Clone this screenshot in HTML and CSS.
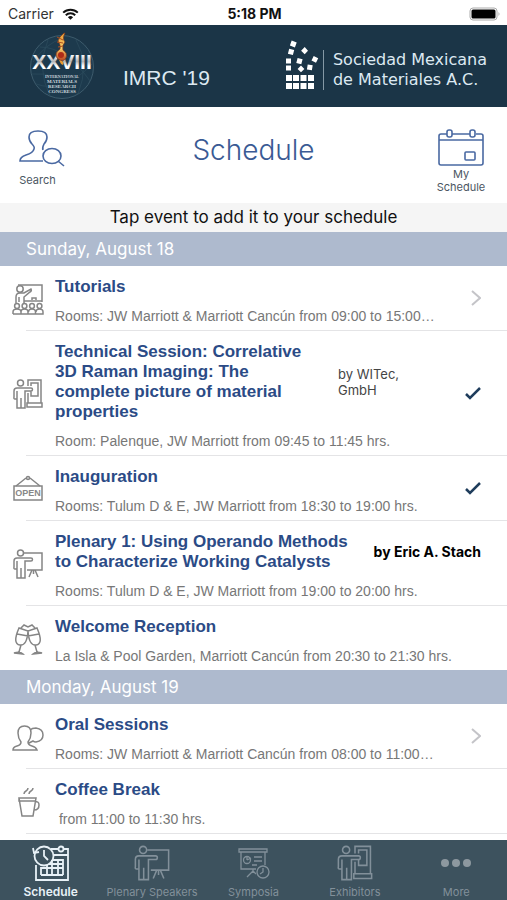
FILE: index.html
```html
<!DOCTYPE html>
<html lang="en">
<head>
<meta charset="utf-8">
<meta name="viewport" content="width=device-width, initial-scale=1">
<title>Schedule</title>
<link rel="stylesheet" href="styles.css">
</head>
<body>
<svg class="defs" aria-hidden="true">
  <symbol id="presenter" viewBox="0 0 32 32">
    <circle cx="8.500" cy="5" r="3"/>
    <path d="M2 13q0-3 3-3h14q1.500 0 1.500 1.500T19 13h-6v17h-4V20M9 30H5V13M5 21H3q-1.500 0-1-2V13M12 5h18v17H15M20 22l-3 7M23 22l3 7M21.500 22v4"/>
  </symbol>
  <symbol id="exhibitor" viewBox="0 0 32 32">
    <circle cx="8.500" cy="5" r="3"/>
    <path d="M2 13q0-3 3-3h14q1.500 0 1.500 1.500T19 13h-6v17h-4V20M9 30H5V13M5 21H3q-1.500 0-1-2V13M16 8V2h13v23M19 8V5h7v13h-7v-5M16 15v10M15 25h15v4H15z"/>
  </symbol>
</svg>
<div class="app">
  <div class="status">
    <div class="carrier"><span>Carrier</span>
      <svg class="wifi" viewBox="0 0 17 12" aria-hidden="true"><path d="M1.200 4.600a10.500 10.500 0 0 1 14.600 0M3.800 7.300a6.700 6.700 0 0 1 9.400 0"/><path class="solid" d="M8.500 11.800 5.900 9.300a3.800 3.800 0 0 1 5.200 0Z"/></svg>
    </div>
    <div class="time">5:18 PM</div>
    <svg class="battery" viewBox="0 0 32 14" aria-hidden="true"><rect class="shell" x="1" y="1" width="27" height="12" rx="3"/><rect x="2.500" y="2.500" width="24" height="9" rx="1.500"/><path class="tip-end" d="M29.500 5q2 2 0 4Z"/></svg>
  </div>

  <header class="brand">
    <svg class="congress" viewBox="0 0 68 72" role="img" aria-label="International Materials Research Congress">
      <defs><linearGradient id="steel" x1="0" y1="0" x2="0" y2="1"><stop offset="0.200" stop-color="#fff"/><stop offset=".5" stop-color="#b4b6b8"/><stop offset=".7" stop-color="#fff"/></linearGradient>
      <linearGradient id="fire" x1="0" y1="0" x2="0" y2="1"><stop offset="0" stop-color="#e99b36"/><stop offset=".55" stop-color="#f9cf6a"/><stop offset="1" stop-color="#b8421e"/></linearGradient></defs>
      <circle cx="34" cy="37" r="31.500" fill="#1d3a4d" stroke="#3d5b6c"/>
      <path d="M5 32q12-18 30-24M12 17q26 0 50 34M4 44q26-3 46 20M20 10q-12 28 2 56M48 10q14 24 2 54M8 54q28 10 56-20" fill="none" stroke="#2b4a5c" stroke-width=".8"/>
      <text class="roman" x="34" y="39" text-anchor="middle">XXVIII</text>
      <path d="M36 3q-5 4-6 8 3 4 2 8-7 5-2 10 5 4 8-1 2-5-3-8-1-5 2-8-3-3 0-9Z" fill="url(#fire)" stroke="#72341d" stroke-width=".7"/>
      <path d="M29 7l6 3m-6 2 6 1m-5 4 5-1" stroke="#ad4e1f" fill="none"/>
      <circle cx="33" cy="25" r="3" fill="#af2b18"/><path d="M31 30q6 1 4 5l-2-1Z" fill="#ea9a31"/>
      <g class="motto" text-anchor="middle"><text class="tiny" x="34" y="48">INTERNATIONAL</text><text x="34" y="53">MATERIALS</text><text x="34" y="58">RESEARCH</text><text x="34" y="63">CONGRESS</text></g>
    </svg>
    <span class="event">IMRC '19</span>
    <div class="society">
      <svg viewBox="0 0 34 52" aria-hidden="true">
        <g fill="#fff"><path d="M1 35h6v6H1zM8 35h6v6H8zM15.500 35h6v6h-6zM23 35h6v6h-6zM1 43h6v6H1zM8 43h6v6H8zM15.500 43h6v6h-6zM23 43h6v6h-6zM1 18.500h5v5H1zM1 25.500h5v5H1z"/>
        <path d="m6.700.6 5 1.800-1.800 5-5-1.800zM4.200 8.800l5 1.300-1.300 5-5-1.300zM19.700 7l3.300 3.700-3.300 3.600-3.600-3.600zM12.600 18l5 1.300-1.300 5-5-1.300zM28.700 16l4.500 2.200-2.200 4.500-4.500-2.200zM16 25.500l3.400 3.400-3.400 3.400-3.400-3.400zM22.700 24.500l5 .8-.8 5-5-.8z"/></g>
      </svg>
      <p>Sociedad Mexicana<br>de Materiales A.C.</p>
    </div>
  </header>

  <div class="toolbar">
    <button class="tool" type="button">
      <svg class="find" viewBox="0 0 54 38" aria-hidden="true"><path d="M32 32H9q0-4 6-6 7-2 8-6 1-2-2-5-3-3-3-7 0-6 9-6t9 6q0 4-3 7-2 4-1 6"/><ellipse cx="41" cy="27" rx="9" ry="7.500"/><path d="m47 32 6 5"/></svg>
      <span>Search</span>
    </button>
    <h1>Schedule</h1>
    <button class="tool tool-calendar" type="button">
      <svg viewBox="0 0 46 38" aria-hidden="true"><path d="M9 5H3q-2 0-2 2v27q0 2 2 2h40q2 0 2-2V7q0-2-2-2h-5M14 5h18M1 11h44"/><rect x="9" y="1" width="5" height="7" rx="2"/><rect x="32" y="1" width="5" height="7" rx="2"/><rect x="27" y="23" width="10" height="8" rx="1"/></svg>
      <span>My<br>Schedule</span>
    </button>
  </div>

  <p class="hint">Tap event to add it to your schedule</p>

  <main class="agenda">
    <section>
      <h2>Sunday, August 18</h2>
      <ul>
        <li><button class="row" type="button">
          <svg class="icon" viewBox="0 0 32 32" aria-hidden="true"><circle cx="8" cy="6" r="3.200"/><path d="M6 2h24v17M4 20v-6q0-4 4-4h4l7-4q1 2-1 3l-6 5v6M7 14v5M12 18h18M20 17v-2h4v2"/><circle cx="5" cy="23" r="2.400"/><circle cx="12.500" cy="23" r="2.400"/><circle cx="20" cy="23" r="2.400"/><circle cx="27.500" cy="23" r="2.400"/><path d="M1 31v-2q0-3 4-3t4 3v2M9 29q0-3 3.500-3t3.500 3v2M16.500 29q0-3 3.500-3t3.500 3v2M24 29q0-3 3.500-3t3.500 3v2H1"/></svg>
          <span class="info"><span class="head"><span class="title">Tutorials</span></span><span class="place">Rooms: JW Marriott &amp; Marriott Cancún from 09:00 to 15:00…</span></span>
          <svg class="mark chevron" viewBox="0 0 16 20" aria-hidden="true"><path d="m7 3 8 7-8 7"/></svg>
        </button></li>
        <li><button class="row" type="button">
          <svg class="icon" aria-hidden="true"><use href="#exhibitor"/></svg>
          <span class="info"><span class="head"><span class="title">Technical Session: Correlative 3D Raman Imaging: The complete picture of material properties</span><span class="company">by WITec, GmbH</span></span><span class="place">Room: Palenque, JW Marriott from 09:45 to 11:45 hrs.</span></span>
          <svg class="mark check" viewBox="0 0 16 20" aria-hidden="true"><path d="m1 11 4 4L15 5"/></svg>
        </button></li>
        <li><button class="row" type="button">
          <svg class="icon" viewBox="0 0 32 32" aria-hidden="true"><rect x="2" y="13" width="28" height="14"/><path d="M4 13 14 5M28 13 18 5"/><circle cx="16" cy="5" r="1.500"/><text class="sign" x="16" y="23" text-anchor="middle">OPEN</text></svg>
          <span class="info"><span class="head"><span class="title">Inauguration</span></span><span class="place">Rooms: Tulum D &amp; E, JW Marriott from 18:30 to 19:00 hrs.</span></span>
          <svg class="mark check" viewBox="0 0 16 20" aria-hidden="true"><path d="m1 11 4 4L15 5"/></svg>
        </button></li>
        <li><button class="row" type="button">
          <svg class="icon" aria-hidden="true"><use href="#presenter"/></svg>
          <span class="info"><span class="head"><span class="title">Plenary 1: Using Operando Methods to Characterize Working Catalysts</span><span class="speaker">by Eric A. Stach</span></span><span class="place">Rooms: Tulum D &amp; E, JW Marriott from 19:00 to 20:00 hrs.</span></span>
        </button></li>
        <li><button class="row" type="button">
          <svg class="icon" viewBox="0 0 32 32" aria-hidden="true"><path d="M7 5Q0 21 8 22q7 1 8-14zM25 5q7 16-1 17-7 1-8-14zM5 11l11 2 11-2M9 22l-2 7M23 22l2 7M2 30l9 1q-3-3-9-1zM30 30l-9 1q3-3 9-1zM9 5l3-3 4 2 4-2 3 3"/></svg>
          <span class="info"><span class="head"><span class="title">Welcome Reception</span></span><span class="place">La Isla &amp; Pool Garden, Marriott Cancún from 20:30 to 21:30 hrs.</span></span>
        </button></li>
      </ul>
    </section>
    <section>
      <h2>Monday, August 19</h2>
      <ul>
        <li><button class="row" type="button">
          <svg class="icon" viewBox="0 0 32 32" aria-hidden="true"><path d="M1 29q0-3 4-4 4-1 4-4-3-4-3-9 0-7 6.500-7T19 12q0 5-3 9 0 3 4 4t5 4ZM18 9q2-2 6-2 7 1 7 7t-7 7q-2 0-3-1l-4 2"/></svg>
          <span class="info"><span class="head"><span class="title">Oral Sessions</span></span><span class="place">Rooms: JW Marriott &amp; Marriott Cancún from 08:00 to 11:00…</span></span>
          <svg class="mark chevron" viewBox="0 0 16 20" aria-hidden="true"><path d="m7 3 8 7-8 7"/></svg>
        </button></li>
        <li><button class="row" type="button">
          <svg class="icon" viewBox="0 0 32 32" aria-hidden="true"><path d="M7 12h17l-3 18H10ZM7 12v3h16M23 16q4-1 4 3 0 5-5 5M12 8q0-2 2-3t2-3M17 8q0-2 2-3t2-3"/></svg>
          <span class="info"><span class="head"><span class="title">Coffee Break</span></span><span class="place">&nbsp;from 11:00 to 11:30 hrs.</span></span>
        </button></li>
      </ul>
    </section>
  </main>

  <nav class="tabs">
    <a class="tab active" href="#schedule" aria-current="page">
      <svg viewBox="0 0 38 38" aria-hidden="true"><path d="M4 21v15h32V5h-4M26 5h-7M22 11h14M9 31h22M9 31v-7h22M15 31V21M20 31V16M26 31V16M31 31V16H20M17 20h14"/><circle cx="12" cy="12" r="9.500"/><circle cx="29" cy="5" r="2.500"/><path d="M12 6v6l4 4M1 4l1 5 5-1"/></svg>
      <span>Schedule</span></a>
    <a class="tab" href="#plenary"><svg viewBox="0 0 32 32" aria-hidden="true"><use href="#presenter"/></svg><span>Plenary Speakers</span></a>
    <a class="tab" href="#symposia">
      <svg viewBox="0 0 38 38" aria-hidden="true"><path d="M5 5h28v3H5zM7 8v17h15M31 8v13M20 13h8M20 17h8M18 21h5M19 25v4M19 27l-6 6M19 27l3 3"/><circle cx="13" cy="16" r="3.500"/><path d="M13 16v-4M13 16l4-2"/><circle cx="29" cy="28" r="6"/><path d="M29 24v4l-3 2"/></svg>
      <span>Symposia</span></a>
    <a class="tab" href="#exhibitors"><svg viewBox="0 0 32 32" aria-hidden="true"><use href="#exhibitor"/></svg><span>Exhibitors</span></a>
    <a class="tab" href="#more"><svg viewBox="0 0 38 38" aria-hidden="true"><g class="dots"><circle cx="8" cy="19" r="4"/><circle cx="19" cy="19" r="4"/><circle cx="30" cy="19" r="4"/></g></svg><span>More</span></a>
  </nav>
</div>
</body>
</html>
```
FILE: styles.css
```css
* { box-sizing: border-box; }
body { margin: 0; background: #fff; font-family: Inter, "Liberation Sans", sans-serif; color: #111; }
h1, h2, p, ul { margin: 0; padding: 0; }
ul { list-style: none; }
button { border: 0; background: none; padding: 0; font: inherit; color: inherit; cursor: pointer; }
svg { flex: none; fill: none; }
.defs { position: absolute; width: 0; height: 0; }
.app { display: flex; flex-direction: column; height: 100vh; }

.status { display: grid; grid-template-columns: 1fr auto 1fr; align-items: center; flex: none; height: 25px; padding: 2px 6px 0 8px; font-size: 14px; }
.carrier { display: flex; align-items: center; gap: 8px; color: #333; }
.time { font-weight: 700; }
.wifi { width: 17px; height: 12px; stroke: #111; stroke-width: 2; }
.wifi .solid { fill: #111; stroke: none; }
.battery { width: 32px; height: 14px; justify-self: end; fill: #000; }
.battery .shell { fill: #fff; stroke: #aaa; }
.battery .tip-end { fill: #aaa; }

.brand { display: flex; align-items: center; flex: none; height: 82px; padding: 0 20px 0 28px; background: #1b3547; color: #dde9f2; }
.congress { width: 68px; height: 72px; }
.roman { font: bold 21px "Liberation Sans", sans-serif; fill: url(#steel); }
.motto { font: bold 5px "Liberation Serif", serif; fill: #cfd8de; }
.motto .tiny { font-size: 4px; }
.event { margin: 24px 0 0 27px; font: 21px/24px "Liberation Sans", sans-serif; }
.society { display: flex; align-items: center; margin-left: auto; }
.society svg { width: 34px; height: 52px; }
.society p { margin: 8px 0 0 4px; padding-left: 9px; border-left: 1px solid #8498a5; font: 16px/20px "DejaVu Sans", sans-serif; }

.toolbar { display: grid; grid-template-columns: 80px 1fr 80px; flex: none; height: 96px; padding: 22px 7px 0 0; color: #3a5a94; }
.toolbar h1 { padding: 1px 0 0 7px; font-size: 28px; line-height: 40px; font-weight: 300; text-align: center; }
.tool { display: flex; flex-direction: column; align-items: center; gap: 7px; font-size: 11px; line-height: 13px; }
.tool:first-child { padding-left: 4px; padding-right: 9px; }
.tool svg { width: 46px; height: 38px; stroke: #4a69a2; stroke-width: 1.6; }
.tool .find { width: 54px; }
.tool span { color: #4b5662; }
.tool-calendar { gap: 1px; padding-left: 2px; }

.hint { flex: none; background: #f5f5f5; font-size: 17px; line-height: 29px; text-align: center; white-space: nowrap; }

.agenda { flex: 1; min-height: 0; overflow: hidden; }
.agenda h2 { padding-left: 26px; background: #aebace; color: #fff; font-size: 17px; line-height: 34px; font-weight: 400; }
.row { display: flex; align-items: center; gap: 11px; width: 100%; min-height: 64px; padding: 11px 26px 4px 12px; text-align: left; }
li:not(:last-child) .row, section:last-child .row { min-height: 65px; padding-bottom: 5px; background: linear-gradient(#e4e4e6, #e4e4e6) 26px 100% / 100% 1px no-repeat; }
.icon { width: 32px; height: 32px; margin-top: -6px; stroke: #858585; stroke-width: 1.5; }
.sign { font: bold 9px "Liberation Sans", sans-serif; fill: #888; stroke: none; }
.info { flex: 1; min-width: 0; }
.head { display: flex; align-items: center; gap: 20px; }
.title { flex: 1; color: #2b4b86; font: bold 17px/20px "Liberation Sans", sans-serif; }
.company { flex: 0 0 116px; padding-right: 32px; color: #444; font-size: 13px; line-height: 16px; }
.speaker { flex: none; color: #000; font-size: 14px; line-height: 16px; font-weight: 700; }
.place { display: block; margin-top: 9px; overflow: hidden; color: #777; font: 14px/20px "Liberation Sans", sans-serif; text-overflow: ellipsis; white-space: nowrap; }
.mark { width: 16px; height: 20px; margin-top: -8px; }
.chevron { stroke: #c4c4c8; stroke-width: 2; }
.check { stroke: #1f3d5c; stroke-width: 2.5; }

.tabs { display: grid; grid-template-columns: repeat(5, 1fr); flex: none; height: 60px; padding-top: 4px; background: #3d525e; }
.tab { display: flex; flex-direction: column; align-items: center; gap: 2px; color: #82909a; font-size: 11px; line-height: 16px; text-decoration: none; white-space: nowrap; }
.tab svg { width: 38px; height: 38px; stroke: currentColor; stroke-width: 1.3; }
.tab .dots { fill: #8d989f; stroke: none; }
.active { color: #e8f1f7; font-size: 12px; font-weight: 600; }
.active svg { stroke-width: 1.8; }
```
